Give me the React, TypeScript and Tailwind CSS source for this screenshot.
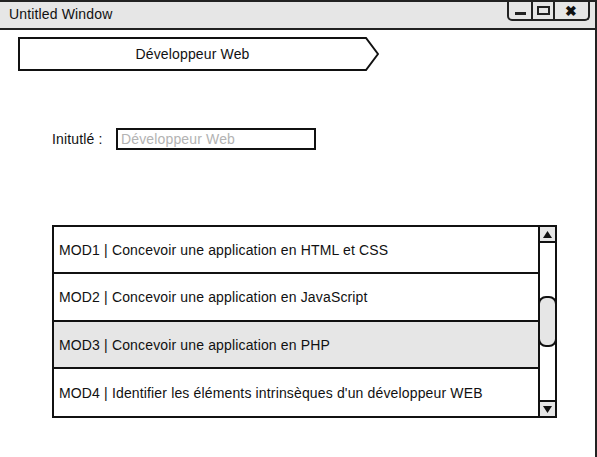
import React from "react";

const rows = [
  "MOD1 | Concevoir une application en HTML et CSS",
  "MOD2 | Concevoir une application en JavaScript",
  "MOD3 | Concevoir une application en PHP",
  "MOD4 | Identifier les éléments intrinsèques d'un développeur WEB",
];

export default function App() {
  return (
    <div
      className="w-[597px] h-[457px] bg-white text-[#111] overflow-hidden flex flex-col border-r-2 border-[#222] tracking-[0.15px]"
      style={{ fontFamily: '"Liberation Sans", Arial, sans-serif' }}
    >
      {/* title bar */}
      <div className="h-[30px] shrink-0 bg-[#e6e6e6] border-t-2 border-b-2 border-[#222] flex items-start justify-between">
        <span className="pl-[9px] pt-[3px] text-[14px] leading-[18px]">Untitled Window</span>
        <div className="mr-[5px] h-[19px] w-[83px] flex border-2 border-t-0 border-[#222] rounded-b-[5px]">
          <div className="w-[24px] flex items-end justify-center pb-[4px] border-r-2 border-[#222]">
            <div className="w-[11px] h-[3px] bg-[#222]" />
          </div>
          <div className="w-[22px] flex items-center justify-center border-r-2 border-[#222]">
            <div className="w-[13px] h-[9px] border-2 border-[#222]" />
          </div>
          <div className="flex-1 flex items-center justify-center text-[14px] font-bold leading-none">✖</div>
        </div>
      </div>

      {/* breadcrumb */}
      <div className="ml-[18px] mt-[7px] flex items-stretch h-[34px]">
        <div className="w-[347px] border-2 border-r-0 border-[#111] flex items-center justify-center text-[14px]">
          Développeur Web
        </div>
        <svg width="14" height="34" viewBox="0 0 14 34" className="block">
          <polyline points="0,1 1,1 13,17 1,33 0,33" fill="white" stroke="#111" strokeWidth="2" />
        </svg>
      </div>

      {/* form field */}
      <div className="ml-[52px] mt-[57px] flex items-center">
        <span className="text-[14px] w-[64px]">Initutlé :</span>
        <div className="w-[200px] h-[22px] border-2 border-[#111] flex items-center pl-[3px] text-[14px] text-[#b3b3b3]">
          Développeur Web
        </div>
      </div>

      {/* list */}
      <div className="ml-[52px] mt-[75px] w-[505px] h-[193px] border-2 border-[#111] flex">
        <div className="flex-1 flex flex-col">
          {rows.map((r, i) => (
            <div
              key={r}
              className={
                "h-[48px] flex items-center pl-[5px] pt-[2px] text-[14px] " +
                (i < rows.length - 1 ? "border-b-2 border-[#111] " : "") +
                (i === 2 ? "bg-[#e6e6e6]" : "")
              }
            >
              {r}
            </div>
          ))}
        </div>
        <div className="w-[17px] border-l-2 border-[#111] flex flex-col">
          <div className="h-[16px] border-b-2 border-[#111] bg-[#e6e6e6] flex items-center justify-center">
            <svg width="9" height="7" viewBox="0 0 9 7"><polygon points="4.5,0 9,7 0,7" fill="#111" /></svg>
          </div>
          <div className="flex-1 flex flex-col pt-[53px]">
            <div className="h-[51px] bg-[#e6e6e6] border-2 border-[#111] rounded-[8px] -ml-[2px] -mr-[2px]" />
          </div>
          <div className="h-[16px] border-t-2 border-[#111] bg-[#e6e6e6] flex items-center justify-center">
            <svg width="9" height="7" viewBox="0 0 9 7"><polygon points="0,0 9,0 4.5,7" fill="#111" /></svg>
          </div>
        </div>
      </div>
    </div>
  );
}
